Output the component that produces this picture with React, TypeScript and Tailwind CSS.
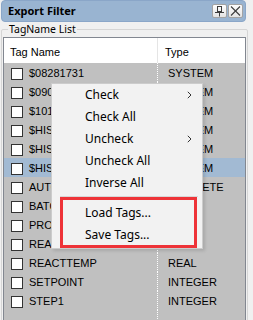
import React from "react";

const rows: { name: string; type: string; selected?: boolean }[] = [
  { name: "$08281731", type: "SYSTEM" },
  { name: "$09072017", type: "SYSTEM" },
  { name: "$10112017", type: "SYSTEM" },
  { name: "$HISTORYCONF", type: "SYSTEM" },
  { name: "$HISTORYSTAT", type: "SYSTEM" },
  { name: "$HISTORYNAME", type: "SYSTEM", selected: true },
  { name: "AUTOMODE", type: "DISCRETE" },
  { name: "BATCHNUM", type: "REAL" },
  { name: "PRODLEVEL", type: "REAL" },
  { name: "REACTLEVEL", type: "REAL" },
  { name: "REACTTEMP", type: "REAL" },
  { name: "SETPOINT", type: "INTEGER" },
  { name: "STEP1", type: "INTEGER" },
];

function Chevron() {
  return (
    <svg width="5" height="8" viewBox="0 0 5 8" className="mr-[10px]">
      <polyline points="0.8,0.8 4,4 0.8,7.2" fill="none" stroke="#333" strokeWidth="1" />
    </svg>
  );
}

function MenuItem({ label, sub }: { label: string; sub?: boolean }) {
  return (
    <div className="h-[22px] flex items-center pl-[33px] text-black">
      <span className="flex-1">{label}</span>
      {sub && <Chevron />}
    </div>
  );
}

export default function App() {
  return (
    <div
      className="w-[253px] h-[320px] bg-[#f0f0f0] relative overflow-hidden"
      style={{ fontFamily: '"Liberation Sans", Arial, sans-serif' }}
    >
      {/* Title bar */}
      <div className="ml-[1px] w-[245px] h-[22px] rounded-[4px] bg-[#99b4d1] border border-[#8aa6c8] flex items-center pl-[6px] pr-[2px]">
        <span
          className="flex-1 text-[11px] font-bold text-black"
          style={{ fontFamily: '"Noto Sans", sans-serif' }}
        >
          Export Filter
        </span>
        <div className="flex gap-[1px]">
          <div className="w-[15px] h-[14px] rounded-[2px] border border-[#a3a3a3] bg-gradient-to-b from-[#fdfdfd] to-[#e4e4e4] flex items-center justify-center">
            <svg width="13" height="12" viewBox="0 0 13 12">
              <rect x="4.5" y="1.5" width="4" height="5" fill="none" stroke="#3c3c3c" strokeWidth="1" />
              <line x1="2" y1="7.5" x2="11" y2="7.5" stroke="#3c3c3c" strokeWidth="1" />
              <line x1="6.5" y1="8" x2="6.5" y2="11.5" stroke="#3c3c3c" strokeWidth="1" />
            </svg>
          </div>
          <div className="w-[15px] h-[14px] rounded-[2px] border border-[#a3a3a3] bg-gradient-to-b from-[#fdfdfd] to-[#e4e4e4] flex items-center justify-center">
            <svg width="13" height="12" viewBox="0 0 13 12">
              <line x1="2" y1="1.5" x2="11" y2="10.5" stroke="#3c3c3c" strokeWidth="1.1" />
              <line x1="11" y1="1.5" x2="2" y2="10.5" stroke="#3c3c3c" strokeWidth="1.1" />
            </svg>
          </div>
        </div>
      </div>

      {/* Group box */}
      <div className="relative mt-[7px] ml-[1px] w-[247px] h-[320px] border border-[#d5d5d5] rounded-[2px] flex flex-col">
        <span
          className="absolute left-[6px] top-[-8px] bg-[#f0f0f0] px-[1px] text-[10.5px] leading-[14px] text-black"
          style={{ fontFamily: '"Noto Sans", sans-serif' }}
        >
          TagName List
        </span>

        {/* List */}
        <div className="mt-[7px] ml-[1px] w-[243px] flex-1 border border-[#828790] bg-[#c0c0c0] flex flex-col text-[11px] text-[#000]">
          {/* Header */}
          <div className="h-[25px] bg-white flex shrink-0">
            <div className="w-[154px] border-r border-[#e5e5e5] pl-[6px] pt-[4px] flex items-center">
              Tag Name
            </div>
            <div className="flex-1 pl-[7px] pt-[4px] flex items-center">Type</div>
          </div>
          {rows.map((r) => (
            <div
              key={r.name}
              className={`h-[19px] flex shrink-0 ${r.selected ? "bg-[#a2bad3]" : ""}`}
            >
              <div className="w-[154px] border-r border-dotted border-white flex items-center pt-[2px] pl-[7px]">
                <div className="w-[12px] h-[12px] bg-white border border-[#333333] shrink-0" />
                <span className="ml-[6px] whitespace-nowrap">{r.name}</span>
              </div>
              <div className="flex-1 flex items-center pt-[2px] pl-[10px] whitespace-nowrap">{r.type}</div>
            </div>
          ))}
          <div className="flex-1 flex">
            <div className="w-[154px] border-r border-dotted border-white" />
          </div>
        </div>
      </div>

      {/* Context menu */}
      <div
        className="absolute left-[51px] top-[83px] w-[152px] border border-[#cccccc] bg-[#f2f2f2] pb-[2px] text-[12px] shadow-[2px_2px_3px_rgba(0,0,0,0.12)]"
        style={{ fontFamily: '"Noto Sans", sans-serif' }}
      >
        <MenuItem label="Check" sub />
        <MenuItem label="Check All" />
        <MenuItem label="Uncheck" sub />
        <MenuItem label="Uncheck All" />
        <MenuItem label="Inverse All" />
        <div className="h-[8px] pt-[2px] pl-[8px] pr-[4px]">
          <div className="h-[1px] bg-[#d7d7d7]" />
        </div>
        <MenuItem label="Load Tags..." />
        <MenuItem label="Save Tags..." />
        <div className="absolute left-[8px] top-[113px] w-[137px] h-[51px] border-[3px] border-[#ee3338]" />
      </div>
    </div>
  );
}
